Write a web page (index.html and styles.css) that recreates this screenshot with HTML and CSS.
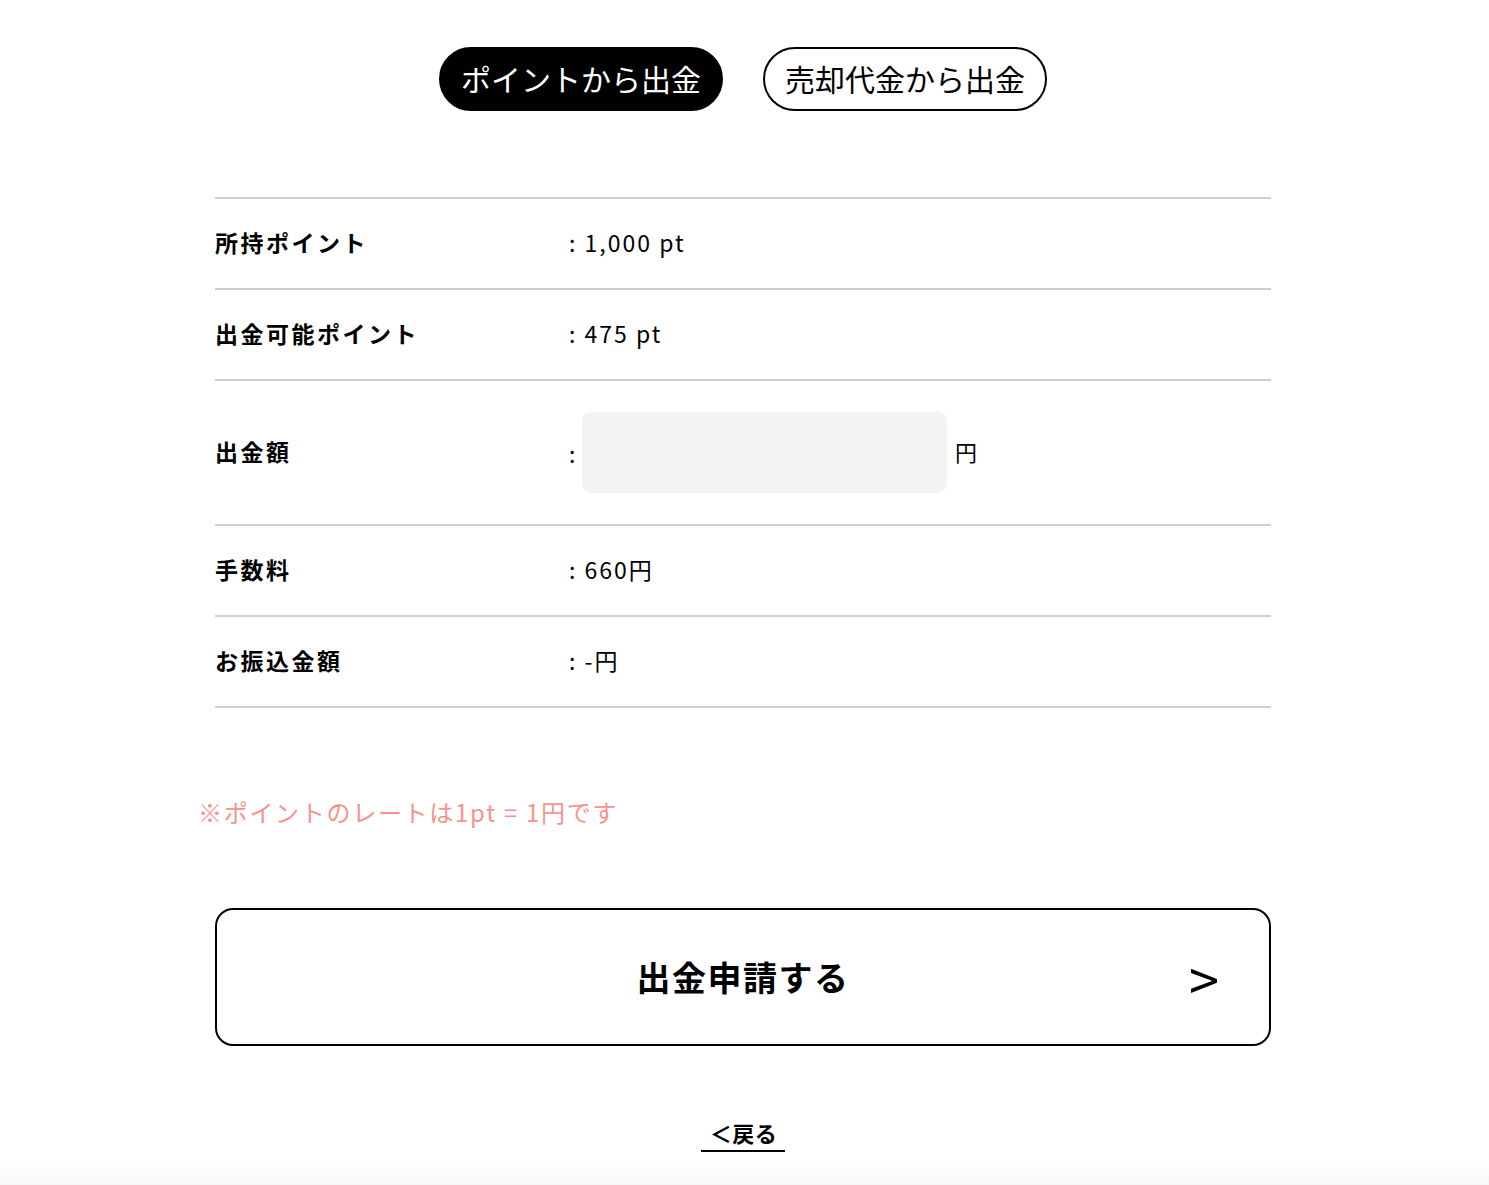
FILE: index.html
```html
<!DOCTYPE html>
<html lang="ja">
<head>
<meta charset="utf-8">
<title>出金</title>
<link rel="stylesheet" href="styles.css">
</head>
<body>
<main class="page">
  <div class="tabs">
    <a class="tab tab-active">ポイントから出金</a>
    <a class="tab">売却代金から出金</a>
  </div>

  <div class="table">
    <div class="row">
      <div class="label">所持ポイント</div>
      <div class="value">: 1,000 pt</div>
    </div>
    <div class="row">
      <div class="label">出金可能ポイント</div>
      <div class="value">: 475 pt</div>
    </div>
    <div class="row row-input">
      <div class="label">出金額</div>
      <div class="value value-input">
        <span class="colon">:</span>
        <input class="amount" type="text">
        <span class="unit">円</span>
      </div>
    </div>
    <div class="row">
      <div class="label">手数料</div>
      <div class="value">: 660円</div>
    </div>
    <div class="row">
      <div class="label">お振込金額</div>
      <div class="value">: -円</div>
    </div>
  </div>

  <p class="note">※ポイントのレートは1pt = 1円です</p>

  <button class="submit"><span class="submit-text">出金申請する</span><span class="submit-arrow">&gt;</span></button>

  <div class="back-wrap"><a class="back">＜戻る</a></div>
</main>
<div class="footer-shade"></div>
</body>
</html>
```

FILE: styles.css
```css
html, body {
  margin: 0;
  padding: 0;
  background: #fff;
}
body {
  font-family: "Noto Sans CJK JP", "Noto Sans", sans-serif;
  color: #000;
  min-height: 1185px;
  display: flex;
  flex-direction: column;
}
.page {
  width: 1056px;
  margin-left: calc(50% - 529.5px);
  display: flex;
  flex-direction: column;
  flex: 1;
}
.tabs {
  display: flex;
  justify-content: center;
  gap: 40px;
  margin-top: 47px;
}
.tab {
  box-sizing: border-box;
  width: 284px;
  height: 64px;
  border: 2px solid #000;
  border-radius: 32px;
  display: flex;
  align-items: center;
  justify-content: center;
  font-size: 30px;
  letter-spacing: 0;
  color: #000;
  background: #fff;
  padding-bottom: 2px;
}
.tab-active {
  background: #000;
  color: #fff;
}
.table {
  margin-top: 86px;
  border-top: 2px solid #cfcfcf;
}
.row {
  display: flex;
  align-items: center;
  height: 89px;
  border-bottom: 2px solid #cfcfcf;
}
.row > div {
  margin-top: -3px;
}
.row-input {
  height: 143px;
}
.label {
  width: 354px;
  font-size: 23px;
  font-weight: 700;
  letter-spacing: 2.5px;
}
.value {
  font-size: 23px;
  letter-spacing: 2px;
  margin-left: 0;
}
.value-input {
  display: flex;
  align-items: center;
}
.row > .value-input {
  margin-top: 0;
}
.colon {
  width: 13px;
}
.amount {
  box-sizing: border-box;
  width: 365px;
  height: 81px;
  border: none;
  border-radius: 9px;
  background: #f3f3f3;
  font-size: 23px;
  padding: 0 16px;
  outline: none;
}
.unit {
  margin-left: 8px;
  font-size: 22px;
  margin-top: -4px;
}
.note {
  margin: 87px 0 0 -17px;
  color: #f8928d;
  font-size: 24px;
  line-height: 34px;
  letter-spacing: 1.7px;
}
.submit {
  margin-top: 79px;
  box-sizing: border-box;
  width: 1056px;
  height: 138px;
  border: 2px solid #000;
  border-radius: 18px;
  background: #fff;
  position: relative;
  display: flex;
  align-items: center;
  justify-content: center;
  font-family: inherit;
  color: #000;
  cursor: pointer;
  padding: 0;
}
.submit-text {
  font-size: 34px;
  font-weight: 700;
  letter-spacing: 1.5px;
  margin-bottom: 2px;
}
.submit-arrow {
  position: absolute;
  right: 50px;
  top: 50%;
  transform: translateY(-48%);
  font-size: 54px;
  line-height: 1;
  font-weight: 400;
}
.back-wrap {
  display: flex;
  justify-content: center;
  margin-top: 71px;
}
.back {
  font-size: 22px;
  font-weight: 700;
  padding: 0 8px 3px 9px;
  border-bottom: 2px solid #000;
  line-height: 30px;
  letter-spacing: 0.5px;
}
.footer-shade {
  height: 28px;
  background: linear-gradient(#fff, #f7f7f7);
  margin-top: auto;
}
```
